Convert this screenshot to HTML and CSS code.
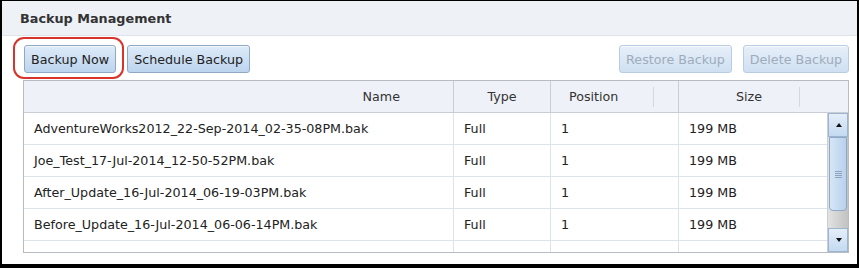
FILE: index.html
```html
<!DOCTYPE html>
<html lang="en">
<head>
    <meta charset="UTF-8">
    <title>Backup Management</title>
    <link rel="stylesheet" href="styles.css">
</head>
<body>
    <div class="panel">
        <div class="panel-header">
            <span class="panel-title">Backup Management</span>
        </div>
        <div class="toolbar">
            <div class="btn-group">
                <div class="highlight-wrap">
                    <button class="btn">Backup Now</button>
                    <span class="highlight"></span>
                </div>
                <button class="btn">Schedule Backup</button>
            </div>
            <div class="btn-group">
                <button class="btn" disabled>Restore Backup</button>
                <button class="btn" disabled>Delete Backup</button>
            </div>
        </div>
        <div class="grid">
            <div class="grid-head">
                <div class="col col-name">Name</div>
                <div class="col col-type">Type</div>
                <div class="col col-pos"><span>Position</span><span class="trigger"></span></div>
                <div class="col col-size"><span>Size</span><span class="trigger"></span></div>
            </div>
            <div class="grid-body">
                <div class="rows">
                    <div class="row"><div>AdventureWorks2012_22-Sep-2014_02-35-08PM.bak</div><div>Full</div><div>1</div><div>199 MB</div></div>
                    <div class="row"><div>Joe_Test_17-Jul-2014_12-50-52PM.bak</div><div>Full</div><div>1</div><div>199 MB</div></div>
                    <div class="row"><div>After_Update_16-Jul-2014_06-19-03PM.bak</div><div>Full</div><div>1</div><div>199 MB</div></div>
                    <div class="row"><div>Before_Update_16-Jul-2014_06-06-14PM.bak</div><div>Full</div><div>1</div><div>199 MB</div></div>
                    <div class="row"><div>Joe_Test_16-Jul-2014_05-50-58PM.bak</div><div>Full</div><div>1</div><div>199 MB</div></div>
                </div>
                <div class="scrollbar">
                    <div class="sb-btn sb-up"></div>
                    <div class="sb-track">
                        <div class="sb-thumb"><span class="grip"></span></div>
                    </div>
                    <div class="sb-btn sb-down"></div>
                </div>
            </div>
        </div>
    </div>
</body>
</html>
```

FILE: styles.css
```css
body {
    margin: 0;
    padding: 1px 2px 4px 2px;
    background-color: #000;
    font-family: "DejaVu Sans", Verdana, sans-serif;
    font-size: 12.7px;
    color: #222;
}
.panel {
    height: 263px;
    background-color: #fff;
    overflow: hidden;
}
.panel-header {
    height: 34px;
    background-color: #eef1f6;
    border-bottom: 1px solid #dfe3ea;
    display: flex;
    align-items: center;
    padding-left: 18px;
}
.panel-title {
    font-weight: bold;
    font-size: 12.8px;
    color: #333;
}
.toolbar {
    display: flex;
    justify-content: space-between;
    padding: 9px 8px 0 22px;
    height: 35px;
    box-sizing: content-box;
}
.btn-group {
    display: flex;
    gap: 11px;
    align-items: flex-start;
}
.btn {
    display: block;
    height: 28px;
    padding: 0 6px;
    font-family: inherit;
    font-size: 12.7px;
    color: #222;
    border: 1px solid #8fa9c4;
    border-radius: 3px;
    background: linear-gradient(#deebf8, #bcd4ee);
    box-shadow: inset 0 1px 0 rgba(255, 255, 255, 0.6);
}
.btn:disabled {
    color: #9eacbb;
    border-color: #b9cde2;
    background: linear-gradient(#e6eff9, #cfe0f2);
}
.highlight-wrap {
    position: relative;
}
.highlight {
    position: absolute;
    left: -11px;
    top: -8px;
    right: -8px;
    bottom: -6px;
    border: 2px solid #d8342c;
    border-radius: 11px;
}

/* grid */
.grid {
    margin: 0 8px 0 21px;
    border: 1px solid #b8bcc2;
    height: 171px;
    overflow: hidden;
}
.grid-head {
    display: grid;
    grid-template-columns: 430px 97px 128px 1fr;
    height: 31px;
    background-color: #eef2f8;
    border-bottom: 1px solid #c9ced6;
}
.grid-head .col {
    display: flex;
    align-items: center;
    border-right: 1px solid #c9ced6;
    color: #333;
}
.grid-head .col:last-child {
    border-right: none;
}
.col-name {
    justify-content: flex-end;
    padding-right: 53px;
}
.col-type {
    justify-content: center;
}
.col-pos,
.col-size {
    justify-content: space-between;
}
.col-pos span:first-child {
    padding-left: 18px;
}
.col-size span:first-child {
    padding-left: 57px;
}
.trigger {
    width: 24px;
    height: 20px;
    border-left: 1px solid #d4d9e0;
}
.col-size .trigger {
    width: 48px;
}
.grid-body {
    display: flex;
    height: 139px;
}
.rows {
    flex: 1;
    overflow: hidden;
}
.row {
    display: grid;
    grid-template-columns: 430px 97px 128px 1fr;
    height: 31px;
    border-bottom: 1px solid #dde3ea;
}
.row div {
    display: flex;
    align-items: center;
    padding-left: 10px;
    border-right: 1px solid #dde3ea;
    white-space: nowrap;
}
.row div:last-child {
    border-right: none;
}

/* scrollbar */
.scrollbar {
    width: 20px;
    display: flex;
    flex-direction: column;
    border-left: 1px solid #c9ced6;
}
.sb-btn {
    height: 22px;
    background: linear-gradient(#e4eef9, #c4daf1);
    border: 1px solid #9db6cf;
    position: relative;
}
.sb-btn::after {
    content: "";
    position: absolute;
    left: 7px;
    top: 9px;
    border-left: 3px solid transparent;
    border-right: 3px solid transparent;
}
.sb-up::after {
    border-bottom: 4px solid #111;
}
.sb-down::after {
    border-top: 4px solid #111;
}
.sb-track {
    flex: 1;
    background: linear-gradient(to right, #e2e2e2, #c2c2c2);
    padding: 0 1px;
}
.sb-thumb {
    height: 72px;
    border: 1px solid #8ea9c6;
    border-radius: 0 0 4px 4px;
    background: linear-gradient(to right, #d7e6f6, #b8d1ec);
    display: flex;
    align-items: center;
    justify-content: center;
}
.grip {
    width: 7px;
    height: 7px;
    background: repeating-linear-gradient(#8ea3bb 0 1px, transparent 1px 2px);
}
```
